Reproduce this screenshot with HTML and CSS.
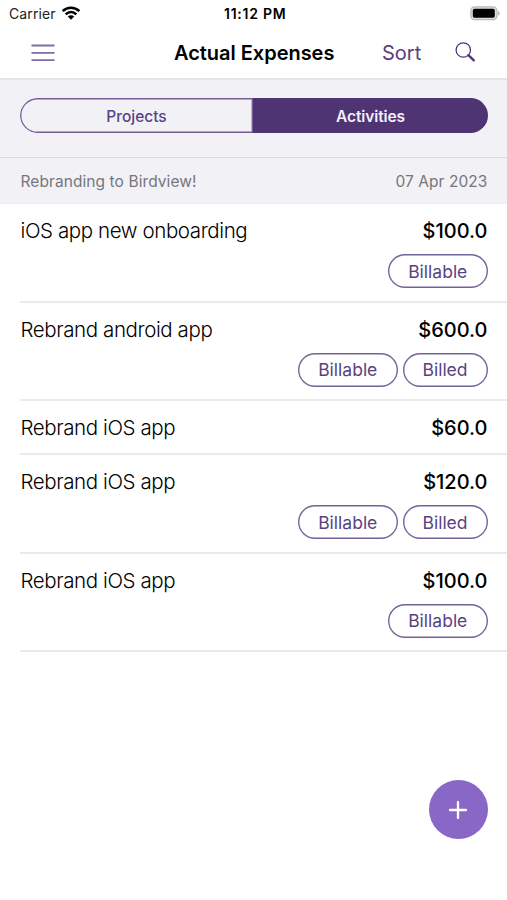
FILE: index.html
```html
<!DOCTYPE html>
<html lang="en">
<head>
<meta charset="utf-8">
<title>Actual Expenses</title>
<link rel="stylesheet" href="styles.css">
</head>
<body>
<div class="status">
  <div class="status-left"><span class="carrier">Carrier</span>
    <svg class="wifi" width="18" height="14" viewBox="0 0 18 14"><g fill="none" stroke="#000" stroke-width="2.5"><path d="M.7 5.100a11.700 11.700 0 0 1 16.600 0"/><path d="M3.700 8.300a7.500 7.500 0 0 1 10.600 0"/></g><path d="M9 13.800 5.800 10.600a4.500 4.500 0 0 1 6.400 0z"/></svg>
  </div>
  <span class="time">11:12 PM</span>
  <svg class="battery" width="30" height="15" viewBox="0 0 30 15"><rect x=".9" y=".9" width="26" height="12.700" rx="3.600" fill="#ddd" stroke="#b9b9b9" stroke-width="1.300"/><rect x="2.800" y="2.700" width="22" height="9" rx="1.800"/><path d="M28.100 4.900c2 .8 2 4 0 4.800z" fill="#aaa"/></svg>
</div>
<header class="nav">
  <svg class="menu" width="24" height="18" viewBox="0 0 24 18"><path d="M.5 1.500H23.500M.5 8.800H23.500M.5 16.100H23.500" stroke="#7f6ea3" stroke-width="1.800"/></svg>
  <h1 class="title">Actual Expenses</h1>
  <span class="sort">Sort</span>
  <svg class="search" width="21" height="21" viewBox="0 0 21 21" fill="none" stroke="#4f3474"><circle cx="8.300" cy="8" r="7.200" stroke-width="1.300"/><path d="M13.400 13.100 18.800 18.400" stroke-width="2.300" stroke-linecap="round"/></svg>
</header>
<div class="segment-bar">
  <div class="segment"><span class="tab projects"><span>Projects</span></span><span class="tab active"><span>Activities</span></span></div>
</div>
<div class="section"><span class="project">Rebranding to Birdview!</span><span class="date">07 Apr 2023</span></div>
<main class="list">
  <div class="row"><div class="line"><span class="name">iOS app new onboarding</span><span class="amount">$100.0</span></div><div class="pills"><span class="pill billable">Billable</span></div></div>
  <div class="row"><div class="line"><span class="name">Rebrand android app</span><span class="amount">$600.0</span></div><div class="pills"><span class="pill billable">Billable</span><span class="pill billed">Billed</span></div></div>
  <div class="row short"><div class="line"><span class="name">Rebrand iOS app</span><span class="amount">$60.0</span></div></div>
  <div class="row"><div class="line"><span class="name">Rebrand iOS app</span><span class="amount">$120.0</span></div><div class="pills"><span class="pill billable">Billable</span><span class="pill billed">Billed</span></div></div>
  <div class="row"><div class="line"><span class="name">Rebrand iOS app</span><span class="amount">$100.0</span></div><div class="pills"><span class="pill billable">Billable</span></div></div>
</main>
<button class="add" aria-label="Add expense"><svg width="18" height="18" viewBox="0 0 18 18"><path d="M9 1V17M1 9H17" stroke="#fff" stroke-width="2.300" stroke-linecap="round"/></svg></button>
</body>
</html>
```
FILE: styles.css
```css
* { box-sizing: border-box; }
body { margin: 0; height: 900px; position: relative; overflow: hidden; background: #fff; color: #000; font-family: Inter, "Liberation Sans", sans-serif; white-space: nowrap; }
svg { display: block; flex: none; }
.status { height: 27px; display: grid; grid-template-columns: 1fr auto 1fr; align-items: center; padding: 0 7px 0 9px; font-size: 14px; }
.status-left { display: flex; align-items: center; gap: 6px; }
.carrier { color: #222; letter-spacing: .12px; }
.wifi { margin-top: -2px; }
.time { font-weight: 600; font-size: 14px; letter-spacing: .75px; margin-right: -1.500px; }
.battery { justify-self: end; }
.nav { height: 53px; display: grid; grid-template-columns: 143px 160px 48px 40px 24px; padding-left: 31px; align-items: center; border-bottom: 2px solid #e5e4e8; }
.title { margin: 0; font-size: 20px; font-weight: 600; line-height: 24px; letter-spacing: -.03px; }
.sort { grid-column: 3 / 5; margin-left: 48px; font-size: 20px; line-height: 24px; color: #583d80; }
.search { grid-column: 5; margin-left: 33px; }
.segment-bar { height: 78px; padding: 18px 19px 0 20px; background: #f2f1f6; border-bottom: 1px solid #dad9df; }
.segment { height: 35px; display: flex; border-radius: 18px; overflow: hidden; background: #f2f1f6; }
.tab { flex: none; display: flex; align-items: center; justify-content: center; font-size: 15.500px; font-weight: 500; color: #5b4186; }
.projects { width: 233px; padding-top: 1px; border-radius: 18px 0 0 18px; box-shadow: inset 0 0 0 1.400px #765c98; }
.active { width: 235px; padding-top: 1px; background: #4f3474; color: #f5effb; font-weight: 600; letter-spacing: -.1px; }
.section { height: 46px; display: flex; justify-content: space-between; align-items: center; padding: 1px 19.500px 0 20.500px; background: #f2f1f6; border-bottom: 1px solid #ececf0; color: #77767b; font-size: 15.500px; letter-spacing: .08px; }
.row { height: 98.250px; margin-left: 20px; padding: 14px 19.500px 0 .5px; border-bottom: 2px solid #eaeaec; }
.list { padding-top: .4px; }
.short { height: 54.500px; }
.line { display: flex; justify-content: space-between; line-height: 26px; font-size: 20px; }
.name { font-weight: 300; font-size: 20.500px; letter-spacing: -.4px; color: #000; }
.amount { font-weight: 500; }
.pills { display: flex; justify-content: flex-end; gap: 5px; margin-top: 10px; }
.pill { height: 34px; box-shadow: inset 0 0 0 1.400px #74639a; border-radius: 17px; display: flex; align-items: center; justify-content: center; color: #594282; font-size: 17.500px; }
.billable { width: 99.500px; }
.billed { width: 85px; }
.add { position: absolute; left: 428.500px; top: 780px; width: 59px; height: 59px; padding: 0; border: 0; border-radius: 50%; background: #8967c6; display: flex; align-items: center; justify-content: center; }
```
